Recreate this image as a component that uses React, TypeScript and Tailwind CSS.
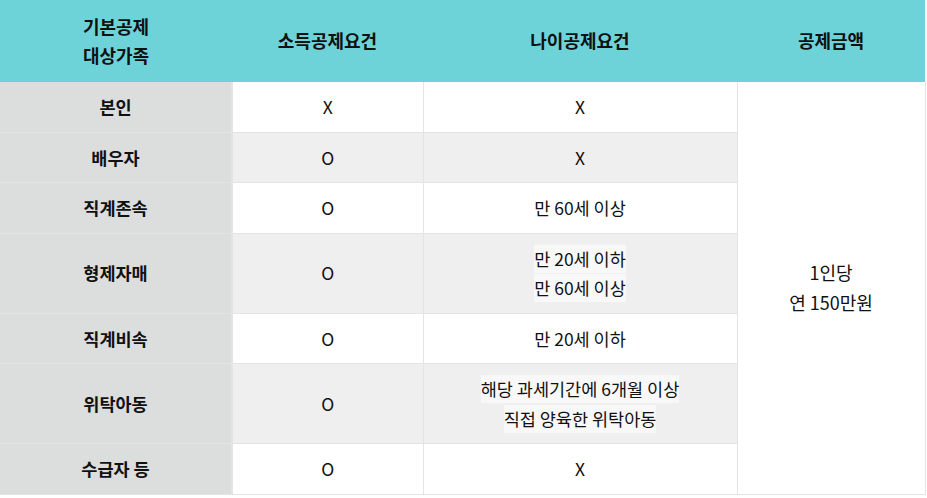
const ROWS: { family: string; income: string; age: string[]; marked?: boolean }[] = [
  { family: '본인', income: 'X', age: ['X'] },
  { family: '배우자', income: 'O', age: ['X'] },
  { family: '직계존속', income: 'O', age: ['만 60세 이상'] },
  { family: '형제자매', income: 'O', age: ['만 20세 이하', '만 60세 이상'], marked: true },
  { family: '직계비속', income: 'O', age: ['만 20세 이하'] },
  { family: '위탁아동', income: 'O', age: ['해당 과세기간에 6개월 이상', '직접 양육한 위탁아동'], marked: true },
  { family: '수급자 등', income: 'O', age: ['X'] }
];

export default function App() {
  return (
    <div
      className="bg-white text-[17.5px] text-[#111]"
      style={{ fontFamily: '"Noto Sans CJK KR", "Noto Sans", sans-serif' }}
    >
      <table className="w-[925px] table-fixed border-collapse text-center leading-[29.5px]">
        <colgroup>
          <col className="w-[232px]" />
          <col className="w-[191px]" />
          <col className="w-[314px]" />
          <col className="w-[188px]" />
        </colgroup>
        <thead className="bg-[#6ed3d8] text-[18px] font-bold">
          <tr className="h-[82px]">
            <th className="font-bold">
              기본공제
              <br />
              대상가족
            </th>
            <th className="font-bold">소득공제요건</th>
            <th className="font-bold">나이공제요건</th>
            <th className="font-bold">공제금액</th>
          </tr>
        </thead>
        <tbody>
          {ROWS.map((row, i) => {
            const shaded = i % 2 === 1;
            return (
              <tr key={row.family} className={shaded ? 'bg-[#efefef]' : 'bg-white'}>
                <td className="border border-l-0 border-t-0 border-[#e4e4e4] border-r-2 bg-[#dcdddd] py-[10px] font-bold">
                  {row.family}
                </td>
                <td className="border border-t-0 border-[#e4e4e4] py-[10px]">{row.income}</td>
                <td className="border border-t-0 border-[#e4e4e4] py-[10px]">
                  {row.age.map((line) => (
                    <div key={line}>
                      {row.marked ? (
                        <span className="inline-block bg-[#f8f8f8] leading-[28px]">{line}</span>
                      ) : (
                        line
                      )}
                    </div>
                  ))}
                </td>
                {i === 0 ? (
                  <td rowSpan={ROWS.length} className="border border-t-0 border-[#e4e4e4] bg-white text-[18px]">
                    1인당
                    <br />연 150만원
                  </td>
                ) : null}
              </tr>
            );
          })}
        </tbody>
      </table>
    </div>
  );
}
